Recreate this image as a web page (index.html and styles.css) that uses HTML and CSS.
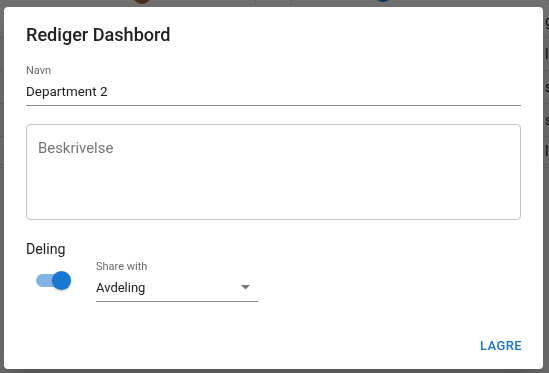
FILE: index.html
```html
<!DOCTYPE html>
<html lang="no">
<head>
    <meta charset="UTF-8">
    <meta name="viewport" content="width=device-width, initial-scale=1.0">
    <title>Rediger Dashbord</title>
    <link rel="stylesheet" href="styles.css">
</head>
<body>
    <!-- Page behind the dialog -->
    <div class="page">
        <div class="page-top">
            <div class="top-cell top-cell-wide"><span class="avatar avatar-brown"></span></div>
            <div class="top-cell top-cell-narrow"></div>
            <div class="top-cell"><span class="avatar avatar-blue"></span></div>
        </div>
        <div class="list">
            <div class="list-row"><span class="list-text">g</span></div>
            <div class="list-row"><span class="list-text">l</span></div>
            <div class="list-row"><span class="list-text">sr</span></div>
            <div class="list-row"><span class="list-text">s</span></div>
            <div class="list-row list-row-last"><span class="list-text">l</span></div>
        </div>
    </div>

    <div class="backdrop"></div>

    <div class="dialog">
        <h2 class="dialog-title">Rediger Dashbord</h2>

        <div class="field">
            <label class="field-label" for="dash-name">Navn</label>
            <input class="field-input" id="dash-name" type="text" value="Department 2">
        </div>

        <textarea class="outlined" placeholder="Beskrivelse"></textarea>

        <div class="section-title">Deling</div>

        <div class="share-row">
            <label class="switch">
                <input type="checkbox" checked>
                <span class="switch-track"></span>
                <span class="switch-thumb"></span>
            </label>

            <div class="field select-field">
                <span class="field-label">Share with</span>
                <div class="select-value">
                    <span>Avdeling</span>
                    <svg class="select-arrow" viewBox="7 10 10 5" width="9" height="4.5">
                        <path d="M7 10l5 5 5-5z" fill="#757575"/>
                    </svg>
                </div>
            </div>
        </div>

        <div class="dialog-actions">
            <button class="btn-text" type="button">Lagre</button>
        </div>
    </div>
</body>
</html>
```

FILE: styles.css
```css
:root {
    --primary-color: #1976d2;
    --text-color: #212121;
    --label-color: #6b6b6b;
    --line-color: #8d8d8d;
    --outline-color: #c4c4c4;
}

* {
    box-sizing: border-box;
    margin: 0;
    padding: 0;
}

body {
    font-family: Roboto, 'Liberation Sans', sans-serif;
    background: #fff;
    color: var(--text-color);
    overflow: hidden;
}

/* page behind */
.page {
    width: 549px;
    height: 373px;
}

.page-top {
    display: flex;
    height: 5px;
}

.top-cell {
    flex: 1;
    position: relative;
    border-right: 1px solid #ddd;
}

.top-cell-wide {
    flex: 0 0 256px;
}

.top-cell-narrow {
    flex: 0 0 36px;
}

.avatar {
    position: absolute;
    top: -14px;
    width: 18px;
    height: 18px;
    border-radius: 50%;
}

.avatar-brown {
    left: 133px;
    background: #a3663f;
}

.avatar-blue {
    left: 82px;
    top: -16px;
    background: #1976d2;
}

.list-row {
    height: 33px;
    border-bottom: 1px solid #e0e0e0;
    display: flex;
    align-items: center;
    padding-left: 545px;
    font-size: 14px;
}

.list-row-last {
    height: 31px;
    border-bottom: 4px double #e0e0e0;
}

.list-text {
    color: #222;
}

.backdrop {
    position: fixed;
    inset: 0;
    background: rgba(0, 0, 0, 0.56);
}

/* dialog */
.dialog {
    position: fixed;
    left: 4px;
    top: 7px;
    width: 539px;
    height: 362px;
    background: #fff;
    border-radius: 4px;
    box-shadow: 0 11px 15px -7px rgba(0, 0, 0, 0.2), 0 24px 38px 3px rgba(0, 0, 0, 0.14);
    padding: 17px 22px 15px;
    display: flex;
    flex-direction: column;
}

.dialog-title {
    font-size: 18.1px;
    font-weight: 500;
    line-height: 22px;
    color: var(--text-color);
    margin-bottom: 18px;
}

.field {
    display: flex;
    flex-direction: column;
}

.field-label {
    font-size: 11px;
    line-height: 13px;
    color: var(--label-color);
}

.field-input {
    font-family: inherit;
    font-size: 13.4px;
    line-height: 20px;
    color: var(--text-color);
    border: none;
    border-bottom: 1px solid var(--line-color);
    padding: 0 0 3.5px;
    margin-top: 4.5px;
    outline: none;
    background: transparent;
}

.outlined {
    display: block;
    margin-top: 18px;
    height: 96px;
    width: 100%;
    resize: none;
    font-family: inherit;
    font-size: 14.9px;
    line-height: 20px;
    border: 1px solid var(--outline-color);
    border-radius: 4px;
    padding: 13px 11px;
    outline: none;
}

.outlined::placeholder {
    color: #767676;
}

.section-title {
    margin-top: 19px;
    font-size: 14.2px;
    line-height: 20px;
}

.share-row {
    display: flex;
    align-items: flex-start;
    margin-top: 1px;
    padding-left: 10px;
    gap: 26px;
}

.switch {
    position: relative;
    flex: 0 0 34px;
    height: 19px;
    margin-top: 11px;
}

.switch input {
    display: none;
}

.switch-track {
    position: absolute;
    left: 0;
    top: 3px;
    width: 31px;
    height: 12.5px;
    border-radius: 7px;
    background: rgba(25, 118, 210, 0.55);
}

.switch-thumb {
    position: absolute;
    left: 15.5px;
    top: -0.5px;
    width: 19px;
    height: 19px;
    border-radius: 50%;
    background: var(--primary-color);
    box-shadow: 0 1px 2px rgba(0, 0, 0, 0.25);
}

.select-field {
    width: 162px;
}

.select-value {
    display: flex;
    align-items: center;
    justify-content: space-between;
    margin-top: 4.5px;
    font-size: 13px;
    line-height: 20px;
    padding-bottom: 3px;
    border-bottom: 1px solid var(--line-color);
}

.select-arrow {
    margin-right: 8px;
}

.dialog-actions {
    margin-top: auto;
    display: flex;
    justify-content: flex-end;
}

.btn-text {
    font-family: inherit;
    font-size: 13px;
    font-weight: 500;
    line-height: 16px;
    letter-spacing: 0.03em;
    text-transform: uppercase;
    color: var(--primary-color);
    background: none;
    border: none;
    cursor: pointer;
    margin-right: -1px;
}
```
